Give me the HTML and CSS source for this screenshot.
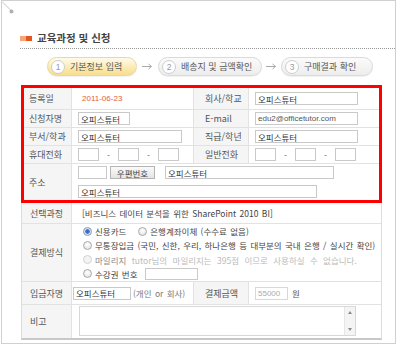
FILE: index.html
```html
<!DOCTYPE html>
<html lang="ko">
<head>
    <meta charset="UTF-8">
    <meta name="viewport" content="width=device-width, initial-scale=1.0">
    <title>교육과정 및 신청</title>
    <link rel="stylesheet" href="styles.css">
</head>
<body>
    <div class="frame">
        <svg class="pin" width="14" height="14" viewBox="0 0 14 14">
            <path d="M0 0.5L9.5 10" stroke="#c4c4c4" stroke-width="1"/>
            <circle cx="9.5" cy="10.5" r="2" fill="#b0b0b0"/>
        </svg>

        <h2 class="title"><span class="title-icon"><i></i><i></i></span>교육과정 및 신청</h2>

        <ol class="steps">
            <li class="step on step1"><span class="num">1</span>기본정보 입력</li>
            <li class="arrow a1"><svg width="11" height="7" viewBox="0 0 11 7"><path d="M0 3.5h9.5M6.5 1l3 2.5-3 2.5" stroke="#aaa" fill="none"/></svg></li>
            <li class="step step2"><span class="num">2</span>배송지 및 금액확인</li>
            <li class="arrow a2"><svg width="11" height="7" viewBox="0 0 11 7"><path d="M0 3.5h9.5M6.5 1l3 2.5-3 2.5" stroke="#aaa" fill="none"/></svg></li>
            <li class="step step3"><span class="num">3</span>구매결과 확인</li>
        </ol>

        <div class="highlight">
            <div class="grid grid-top">
                <div class="label">등록일</div>
                <div class="value"><span class="date">2011-06-23</span></div>
                <div class="label label2">회사/학교</div>
                <div class="value"><input class="field w103" type="text" value="오피스튜터"></div>

                <div class="label">신청자명</div>
                <div class="value"><input class="field w52" type="text" value="오피스튜터"></div>
                <div class="label label2">E-mail</div>
                <div class="value"><input class="field w103 latin" type="text" value="edu2@officetutor.com"></div>

                <div class="label">부서/학과</div>
                <div class="value"><input class="field w104" type="text" value="오피스튜터"></div>
                <div class="label label2">직급/학년</div>
                <div class="value"><input class="field w103" type="text" value="오피스튜터"></div>

                <div class="label">휴대전화</div>
                <div class="value">
                    <input class="field phone" type="text"><span class="dash">-</span><input class="field phone" type="text"><span class="dash">-</span><input class="field phone" type="text">
                </div>
                <div class="label label2">일반전화</div>
                <div class="value">
                    <input class="field phone" type="text"><span class="dash">-</span><input class="field phone" type="text"><span class="dash">-</span><input class="field phone" type="text">
                </div>

                <div class="label">주소</div>
                <div class="value span-3 address">
                    <div class="line">
                        <input class="field w29" type="text"><button class="zip">우편번호</button><input class="field w169" type="text" value="오피스튜터">
                    </div>
                    <div class="line">
                        <input class="field w239" type="text" value="오피스튜터">
                    </div>
                </div>
            </div>
        </div>

        <div class="grid grid-bottom">
            <div class="label">선택과정</div>
            <div class="value span-3"><span class="course">[비즈니스 데이터 분석을 위한 SharePoint 2010 BI]</span></div>

            <div class="label">결제방식</div>
            <div class="value span-3 pay">
                <div class="opt"><span class="radio checked"></span>신용카드<span class="radio second"></span>은행계좌이체 (수수료 없음)</div>
                <div class="opt"><span class="radio"></span>무통장입금 (국민, 신한, 우리, 하나은행 등 대부분의 국내 은행 / 실시간 확인)</div>
                <div class="opt off"><span class="radio"></span><span class="mile">마일리지</span> tutor님의 마일리지는 395점 이므로 사용하실 수 없습니다.</div>
                <div class="opt"><span class="radio"></span>수강권 번호<input class="field w53 coupon" type="text"></div>
            </div>

            <div class="label">입금자명</div>
            <div class="value depositor"><input class="field w58" type="text" value="오피스튜터"><span class="hint">(개인 or 회사)</span></div>
            <div class="label label2">결제금액</div>
            <div class="value"><input class="field w33 amount" type="text" value="55000"><span class="won">원</span></div>

            <div class="label">비고</div>
            <div class="value span-3 memo-cell">
                <div class="memo">
                    <div class="memo-bar"><i class="up"></i><i class="down"></i></div>
                </div>
            </div>
        </div>
    </div>
</body>
</html>
```

FILE: styles.css
```css
* {
    box-sizing: border-box;
}
body {
    margin: 0;
    font-family: "Noto Sans CJK KR", "Liberation Sans", sans-serif;
    font-size: 8.5px;
    color: #444;
    background-color: #fff;
}
.frame {
    position: relative;
    margin-left: 1px;
    width: 395px;
    height: 344px;
    border: 1px solid #d0d0d0;
}
.pin {
    position: absolute;
    top: 0;
    left: 0;
}
.title {
    display: flex;
    align-items: center;
    margin: 30px 0 0 18px;
    padding-bottom: 3px;
    border-bottom: 1px dotted #999;
    font-size: 10.5px;
    line-height: 14px;
    font-weight: bold;
    color: #444;
}
.title-icon {
    display: flex;
    margin-right: 5px;
}
.title-icon i {
    width: 6px;
    height: 5px;
    background-color: #f6a47a;
}
.title-icon i + i {
    background-color: #e4571c;
}

/* steps */
.steps {
    list-style: none;
    display: flex;
    align-items: center;
    margin: 8px 0 0 45px;
    padding: 0;
}
.step {
    display: flex;
    align-items: center;
    height: 19px;
    padding-left: 3px;
    border: 1px solid #dadada;
    border-radius: 10px;
    background: linear-gradient(#fbfbfb, #ededed);
    box-shadow: 0 1px 1px rgba(0,0,0,0.06);
    font-size: 9px;
    color: #5a5a5a;
    white-space: nowrap;
}
.step.on {
    border-color: #e8d9a0;
    background: linear-gradient(#fffbea, #f6de8a);
}
.step1 { width: 90px; }
.step2 { width: 104px; }
.step3 { width: 92px; }
.num {
    display: flex;
    align-items: center;
    justify-content: center;
    flex-shrink: 0;
    width: 14px;
    height: 14px;
    margin-right: 5px;
    border: 1px solid #cdcdcd;
    border-radius: 50%;
    background-color: #fff;
    font-family: "Liberation Sans", sans-serif;
    font-size: 8.5px;
    color: #999;
}
.arrow {
    display: flex;
    justify-content: center;
}
.a1 { width: 21px; }
.a2 { width: 19px; }

/* form tables */
.highlight {
    margin: 9px 0 0 19px;
    width: 361px;
    border: 3px solid #f00;
}
.grid {
    display: grid;
    gap: 1px;
    background-color: #e2e2e2;
}
.grid-top {
    grid-template-columns: 47px 121px 54px 130px;
    grid-template-rows: 21px 17px 17px 17px 36px;
}
.grid-bottom {
    margin-left: 19px;
    width: 361px;
    border: 1px solid #dcdcdc;
    border-top: 0;
    border-bottom: 2px solid #c8c8c8;
    grid-template-columns: 49px 121px 54px 132px;
    grid-template-rows: 20px 57px 22px 33px;
}
.label {
    display: flex;
    align-items: center;
    padding-left: 5px;
    background-color: #f5f5f5;
    font-size: 9px;
    color: #555;
    white-space: nowrap;
}
.grid-bottom .label {
    padding-left: 8px;
}
.grid .label2 {
    padding-left: 11px;
}
.value {
    display: flex;
    align-items: center;
    padding-left: 6px;
    background-color: #fff;
    word-spacing: 1px;
}
.span-3 {
    grid-column: 2 / 5;
}
.date {
    padding-left: 4px;
    font-family: "Liberation Sans", sans-serif;
    font-size: 8px;
    color: #e0603a;
}
.course {
    padding-left: 4px;
    color: #444;
}

.field {
    height: 13px;
    margin: 0;
    padding: 0 2px;
    border: 1px solid #c9c9c9;
    background-color: #fff;
    font-family: inherit;
    font-size: 8.5px;
    color: #333;
    outline: none;
}
.latin {
    font-family: "Liberation Sans", sans-serif;
    font-size: 8px;
    color: #555;
}
.w29 { width: 29px; }
.w33 { width: 33px; }
.w52 { width: 52px; }
.w53 { width: 53px; }
.w58 { width: 58px; }
.w103 { width: 103px; }
.w104 { width: 104px; }
.w169 { width: 169px; }
.w239 { width: 239px; }
.phone { width: 21px; }
.dash {
    width: 19px;
    text-align: center;
    color: #666;
}
.address {
    flex-direction: column;
    align-items: flex-start;
    justify-content: center;
    gap: 6px;
}
.line {
    display: flex;
    align-items: center;
}
.zip {
    width: 45px;
    height: 13px;
    margin: 0 10px 0 3px;
    padding: 0;
    border: 1px solid #b5b5b5;
    background: linear-gradient(#fafafa, #e4e4e4);
    font-family: inherit;
    font-size: 8.5px;
    color: #444;
}

/* payment */
.pay {
    flex-direction: column;
    align-items: flex-start;
    justify-content: center;
    padding-left: 11px;
}
.opt {
    display: flex;
    align-items: center;
    height: 14.5px;
    white-space: pre;
}
.radio {
    flex-shrink: 0;
    width: 9px;
    height: 9px;
    margin-right: 3px;
    border: 1px solid #a9a9a9;
    border-radius: 50%;
    background: radial-gradient(circle at 50% 35%, #fff, #dedede);
}
.radio.checked {
    background: radial-gradient(circle, #2f63b8 0, #4a7dd0 2px, #dfe7f3 2.6px, #c9d3e0 100%);
    border-color: #8a9bb5;
}
.radio.second {
    margin-left: 12px;
}
.off {
    color: #bbb;
    word-spacing: 3px;
}
.off .radio {
    border-color: #d2d2d2;
    background: #f4f4f4;
}
.mile {
    color: #888;
}
.coupon {
    height: 12px;
    margin-left: 8px;
}
.depositor {
    padding-left: 1px;
}
.hint {
    margin-left: 2px;
    color: #777;
}
.amount {
    border-color: #d8d8d8;
    font-family: "Liberation Sans", sans-serif;
    font-size: 8px;
    color: #aaa;
}
.won {
    margin-left: 4px;
    color: #555;
}

/* memo */
.memo-cell {
    align-items: flex-start;
    padding: 1px 0 0 7px;
}
.memo {
    display: flex;
    justify-content: flex-end;
    width: 277px;
    height: 30px;
    border: 1px solid #d8d8d8;
}
.memo-bar {
    display: flex;
    flex-direction: column;
    align-items: center;
    justify-content: space-between;
    width: 11px;
    padding: 4px 0;
    border-left: 1px solid #e6e6e6;
    background-color: #f4f4f4;
}
.up {
    border: 2.5px solid transparent;
    border-bottom: 3px solid #8a8a8a;
    border-top: 0;
}
.down {
    border: 2.5px solid transparent;
    border-top: 3px solid #8a8a8a;
    border-bottom: 0;
}
```
